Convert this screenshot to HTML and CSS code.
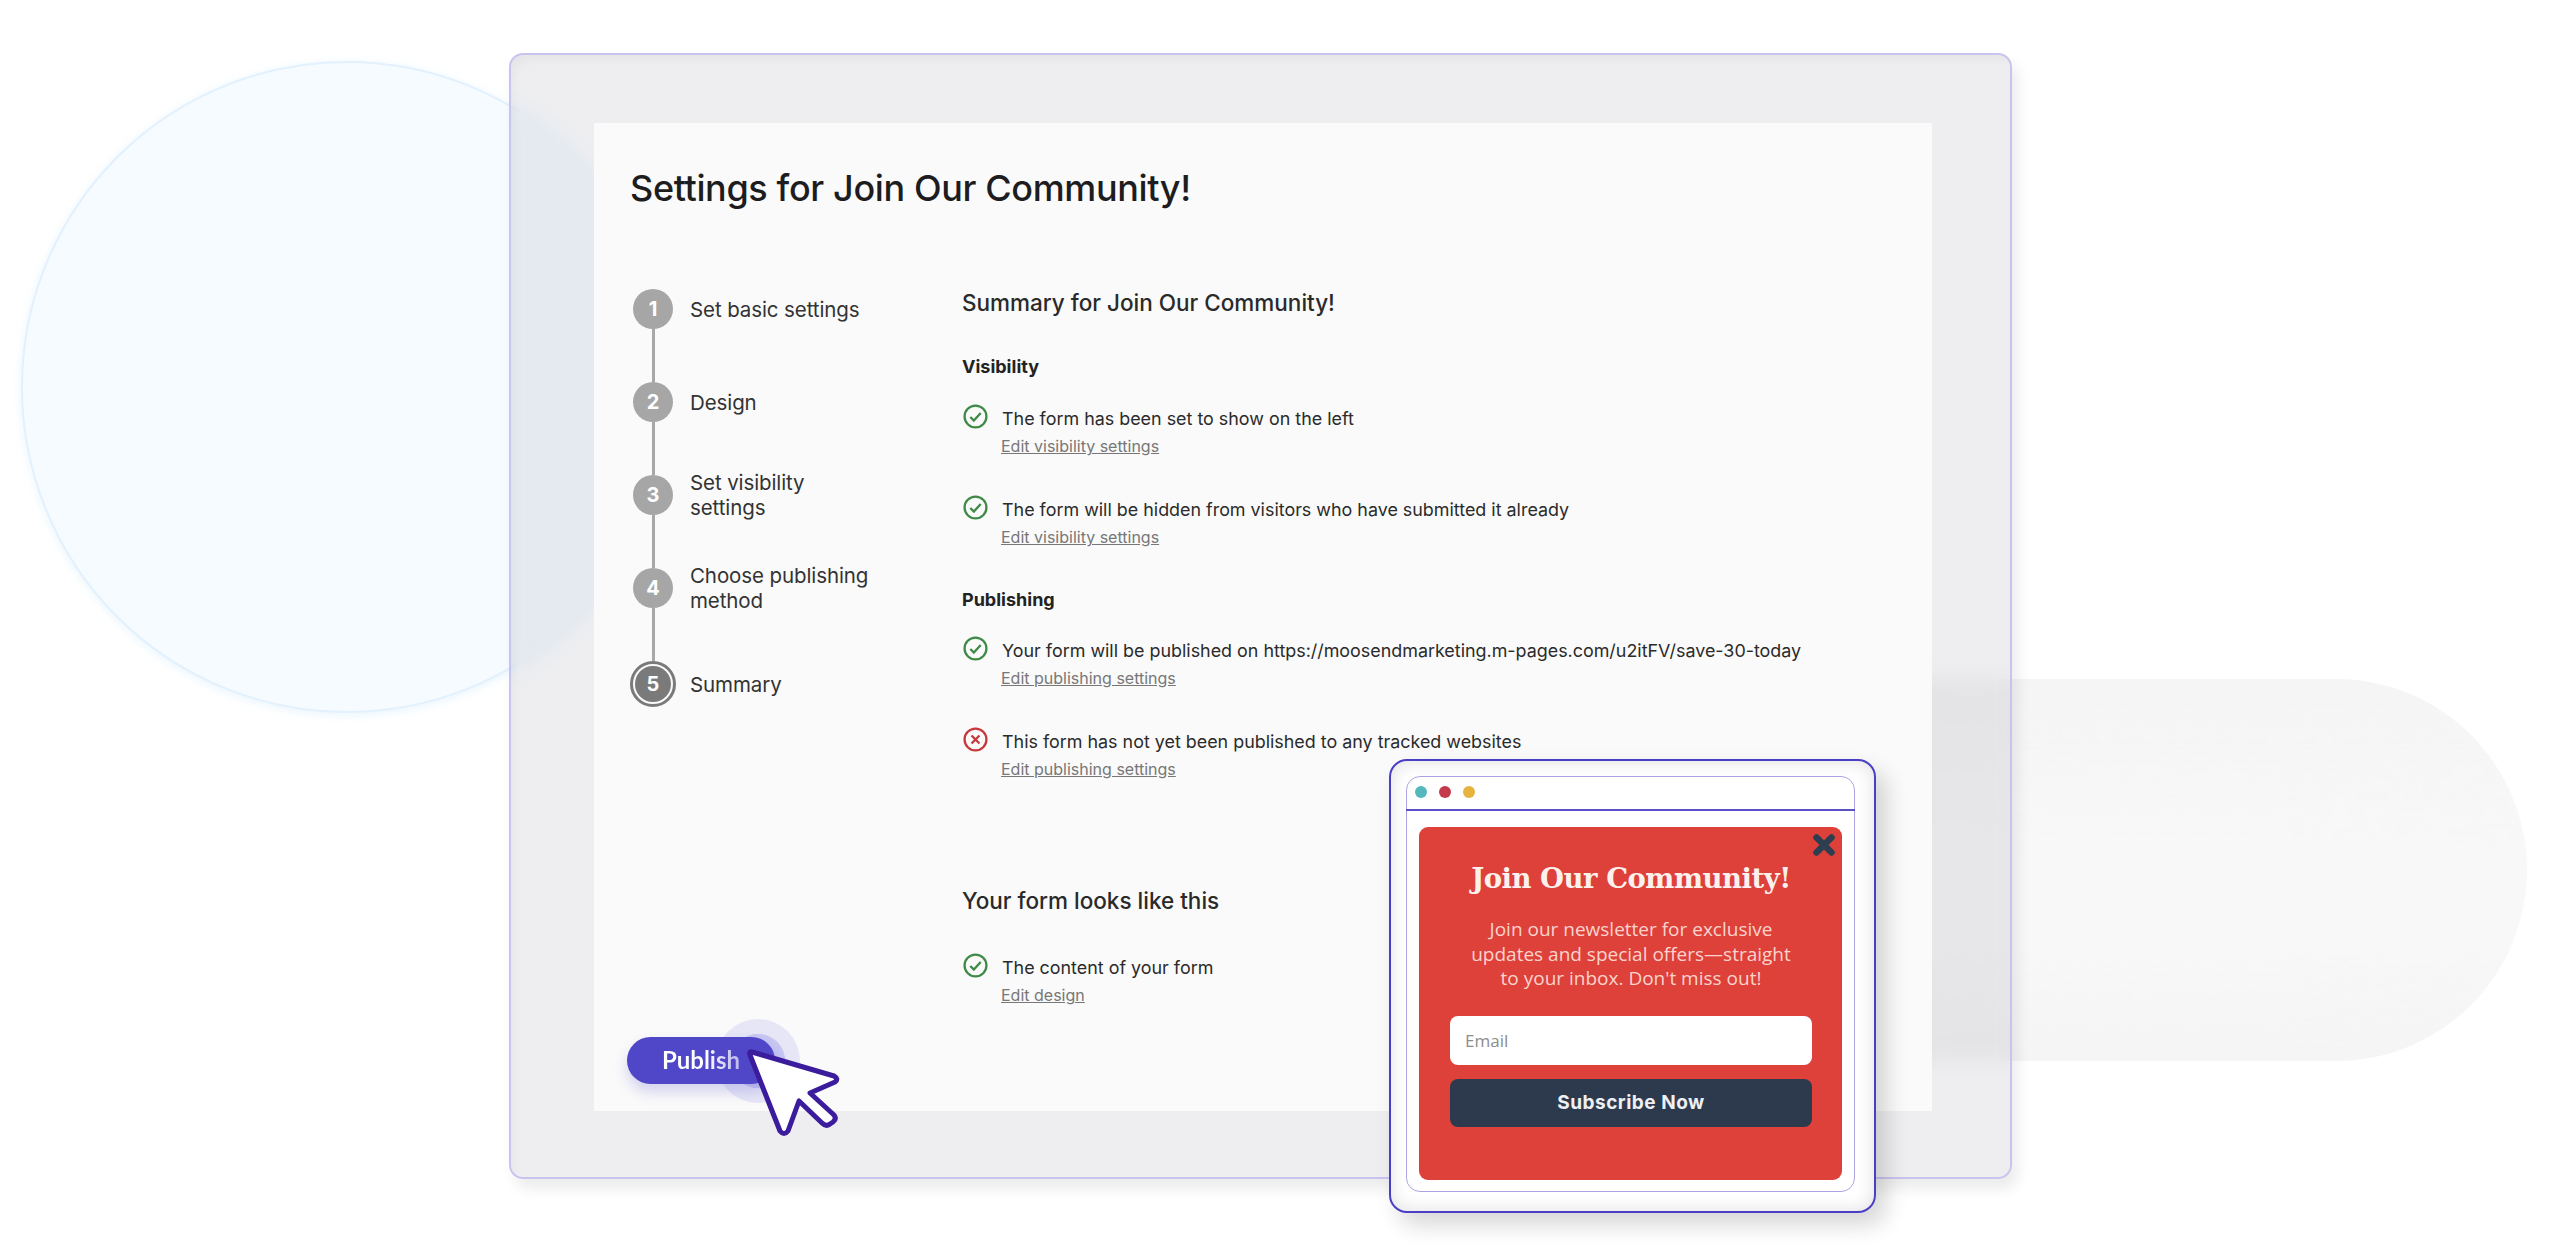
FILE: index.html
```html
<!DOCTYPE html>
<html lang="en">
<head>
  <meta charset="UTF-8" />
  <title>Settings for Join Our Community!</title>
  <link rel="stylesheet" href="styles.css">
</head>
<body>
  <div class="stage">
    <div class="bg-circle"></div>
    <div class="bg-pill">
      <svg class="pill-grain" width="1100" height="382">
        <filter id="grain">
          <feTurbulence type="fractalNoise" baseFrequency="0.06 0.08" numOctaves="4" seed="7" />
          <feColorMatrix values="0 0 0 0 0.91  0 0 0 0 0.91  0 0 0 0 0.91  0 0 0 12 -5.4" />
        </filter>
        <rect width="1100" height="382" filter="url(#grain)" />
      </svg>
    </div>

    <div class="frame">
      <div class="panel">
        <h1 class="titulo">Settings for Join Our Community!</h1>
        <div class="colunas">
          <div class="coluna-esq">
            <ol class="steps">
              <li class="step"><span class="step-num">1</span><span class="step-txt">Set basic settings</span></li>
              <li class="step"><span class="step-num">2</span><span class="step-txt">Design</span></li>
              <li class="step"><span class="step-num">3</span><span class="step-txt">Set visibility<br>settings</span></li>
              <li class="step"><span class="step-num">4</span><span class="step-txt">Choose publishing<br>method</span></li>
              <li class="step step-atual"><span class="step-num">5</span><span class="step-txt">Summary</span></li>
            </ol>
            <div class="publish-wrap">
              <span class="ripple"></span>
              <button class="publish"><span>Publish</span></button>
            </div>
          </div>

          <div class="coluna-dir">
            <h2 class="resumo">Summary for Join Our Community!</h2>

            <h3 class="grupo">Visibility</h3>
            <div class="item">
              <svg class="ico" viewBox="0 0 24 24"><circle cx="12" cy="12" r="10.5" /><path d="M7 12.5l3.4 3.4L17 8.6" /></svg>
              <div>
                <p>The form has been set to show on the left</p>
                <a href="#">Edit visibility settings</a>
              </div>
            </div>
            <div class="item">
              <svg class="ico" viewBox="0 0 24 24"><circle cx="12" cy="12" r="10.5" /><path d="M7 12.5l3.4 3.4L17 8.6" /></svg>
              <div>
                <p>The form will be hidden from visitors who have submitted it already</p>
                <a href="#">Edit visibility settings</a>
              </div>
            </div>

            <h3 class="grupo grupo-pub">Publishing</h3>
            <div class="item">
              <svg class="ico" viewBox="0 0 24 24"><circle cx="12" cy="12" r="10.5" /><path d="M7 12.5l3.4 3.4L17 8.6" /></svg>
              <div>
                <p>Your form will be published on https://moosendmarketing.m-pages.com/u2itFV/save-30-today</p>
                <a href="#">Edit publishing settings</a>
              </div>
            </div>
            <div class="item">
              <svg class="ico ico-erro" viewBox="0 0 24 24"><circle cx="12" cy="12" r="10.5" /><path d="M8.2 8.2l7.6 7.6M15.8 8.2l-7.6 7.6" /></svg>
              <div>
                <p>This form has not yet been published to any tracked websites</p>
                <a href="#">Edit publishing settings</a>
              </div>
            </div>

            <h2 class="resumo resumo-form">Your form looks like this</h2>
            <div class="item item-form">
              <svg class="ico" viewBox="0 0 24 24"><circle cx="12" cy="12" r="10.5" /><path d="M7 12.5l3.4 3.4L17 8.6" /></svg>
              <div>
                <p>The content of your form</p>
                <a href="#">Edit design</a>
              </div>
            </div>
          </div>
        </div>
      </div>
    </div>

    <svg class="cursor" viewBox="0 0 92 90" width="92" height="90">
      <path d="M4 3L86 27Q91 30 87 33L62 44L86 66Q89 70 85 73L82 75Q78 78 74 74L51 52L40 82Q36 87 32 82L2 6Q1 2 4 3Z" />
    </svg>

    <div class="popup">
      <div class="janela">
        <div class="janela-barra">
          <span class="dot dot-a"></span>
          <span class="dot dot-b"></span>
          <span class="dot dot-c"></span>
        </div>
        <div class="form-red">
          <svg class="fechar" viewBox="0 0 24 24" width="24" height="24"><path d="M4.5 4.5l15 15M19.5 4.5l-15 15" /></svg>
          <h2>Join Our Community!</h2>
          <p>Join our newsletter for exclusive updates and special offers—straight to your inbox. Don't miss out!</p>
          <div class="campo-email">Email</div>
          <button class="subscribe">Subscribe Now</button>
        </div>
      </div>
    </div>
  </div>
</body>
</html>
```

FILE: styles.css
```css
* {
  box-sizing: border-box;
}

body {
  margin: 0;
  background: #fff;
  font-family: 'Inter', sans-serif;
  color: #222;
  overflow: hidden;
}

.stage {
  position: relative;
  width: 2560px;
  height: 1249px;
  padding: 53px 0 0 509px;
  overflow: hidden;
}

/* background shapes */
.bg-circle {
  position: absolute;
  left: 21px;
  top: 61px;
  width: 652px;
  height: 652px;
  border-radius: 50%;
  background: #f5fbff;
  border: 2px solid #e2f1fd;
  box-shadow: 0 2px 10px rgba(190, 225, 250, 0.35);
}

.bg-pill {
  position: absolute;
  left: 1500px;
  top: 679px;
  width: 1027px;
  height: 382px;
  border-radius: 191px;
  overflow: hidden;
  background: linear-gradient(to bottom, #f5f5f5, #f8f8f8 40%, #f8f8f8 70%, #f5f5f5);
}

.pill-grain {
  display: block;
  opacity: 0.6;
  -webkit-mask-image: linear-gradient(to bottom, #000, transparent 48%, transparent 70%, #000);
  mask-image: linear-gradient(to bottom, #000, transparent 48%, transparent 70%, #000);
}

/* main window */
.frame {
  position: relative;
  width: 1503px;
  height: 1126px;
  padding: 68px 78px 0 83px;
  background: rgba(60, 60, 85, 0.085);
  -webkit-backdrop-filter: blur(10px);
  backdrop-filter: blur(10px);
  border: 2px solid #c8c4f0;
  border-radius: 14px;
  box-shadow: 6px 10px 14px rgba(0, 0, 0, 0.08), inset 10px 12px 10px -8px rgba(0, 0, 0, 0.04);
}

.panel {
  height: 988px;
  padding: 42px 0 27px 36px;
  background: #fafafa;
  display: flex;
  flex-direction: column;
}

.titulo {
  margin: 0 0 78px;
  font-size: 36px;
  line-height: 46px;
  letter-spacing: -0.37px;
  font-weight: 500;
  color: #1d1d1f;
}

.colunas {
  flex: 1;
  display: grid;
  grid-template-columns: 332px 1fr;
}

.coluna-esq {
  display: flex;
  flex-direction: column;
}

/* steps */
.steps {
  list-style: none;
  margin: 0;
  padding: 0 0 0 3px;
  display: flex;
  flex-direction: column;
  gap: 53px;
}

.step {
  position: relative;
  display: flex;
  align-items: center;
  gap: 17px;
  height: 40px;
}

.step-num {
  flex: none;
  width: 40px;
  height: 40px;
  border-radius: 50%;
  background: #a6a6a6;
  color: #fff;
  font-size: 20px;
  font-weight: 700;
  display: flex;
  align-items: center;
  justify-content: center;
}

.step:not(:last-child)::after {
  content: "";
  position: absolute;
  left: 19px;
  top: 40px;
  width: 3px;
  height: 53px;
  background: #a8a8a8;
}

.step-txt {
  font-size: 20.5px;
  line-height: 25px;
  letter-spacing: -0.1px;
  color: #333;
}

.step-atual {
  height: 46px;
  gap: 14px;
}

.step-atual .step-num {
  width: 46px;
  height: 46px;
  margin-left: -3px;
  padding: 2px;
  border: 3px solid #7a7a7a;
  background: #7a7a7a content-box;
}

/* publish */
.publish-wrap {
  position: relative;
  margin-top: auto;
  margin-left: -3px;
  width: 148px;
  height: 47px;
}

.ripple {
  position: absolute;
  left: 89px;
  top: -18px;
  width: 84px;
  height: 84px;
  border-radius: 50%;
  background: radial-gradient(circle closest-side, #b9b8ef 0, #c9c8f2 64%, #e6e6f6 65%, #e6e6f6 100%);
}

.publish {
  position: relative;
  display: block;
  width: 148px;
  height: 47px;
  padding: 0 0 2px;
  border: none;
  border-radius: 24px;
  background: #4f46c8;
  box-shadow: 0 8px 14px rgba(79, 70, 200, 0.22);
  font-family: 'Lato', sans-serif;
  font-size: 24px;
  font-weight: 700;
}

.publish span {
  background: linear-gradient(to right, #fff 55%, #b9b6ee);
  -webkit-background-clip: text;
  background-clip: text;
  color: transparent;
}

/* summary column */
.resumo {
  margin: -1px 0 37px;
  font-size: 22.5px;
  line-height: 30px;
  font-weight: 500;
  color: #2a2a2a;
}

.resumo-form {
  margin: 107px 0 40px;
}

.grupo {
  margin: 0 0 28px;
  font-size: 18px;
  line-height: 24px;
  font-weight: 700;
  color: #222;
}

.grupo-pub {
  margin: 41px 0 27px;
}

.item {
  display: flex;
  margin-left: 1px;
  margin-top: 42px;
}

.grupo + .item,
.item-form {
  margin-top: 0;
}

.ico {
  flex: none;
  width: 25px;
  height: 25px;
  margin-top: -3px;
  margin-right: 14px;
  fill: none;
  stroke: #3f8a47;
  stroke-width: 2.2;
}

.ico-erro {
  stroke: #c8373c;
}

.item p {
  margin: 0 0 5px;
  font-size: 17.9px;
  line-height: 24px;
  color: #2b2b2b;
}

.item a {
  display: block;
  margin-left: -1px;
  font-size: 16px;
  line-height: 20px;
  color: #777;
}

/* mouse cursor */
.cursor {
  position: absolute;
  left: 748px;
  top: 1049px;
  overflow: visible;
}

.cursor path {
  fill: #fff;
  stroke: #3a1c9c;
  stroke-width: 5;
  stroke-linejoin: round;
}

/* form preview */
.popup {
  position: absolute;
  left: 1389px;
  top: 759px;
  width: 487px;
  height: 454px;
  padding: 15px 19px 19px 15px;
  background: #fff;
  border: 2.5px solid #4a3fc4;
  border-radius: 18px;
  box-shadow: 10px 12px 22px rgba(0, 0, 0, 0.16), inset 0 0 18px rgba(0, 0, 0, 0.13);
}

.janela {
  height: 100%;
  background: #fff;
  border: 1.5px solid #aaa5e2;
  border-radius: 14px;
  padding-bottom: 11px;
  display: flex;
  flex-direction: column;
}

.janela-barra {
  flex: none;
  height: 34px;
  display: flex;
  align-items: center;
  gap: 12px;
  padding: 0 0 2px 9px;
  border-bottom: 2px solid #5a50c8;
  margin: 0 -1px;
}

.dot {
  width: 12px;
  height: 12px;
  border-radius: 50%;
}

.dot-a { background: #55b9bb; }
.dot-b { background: #c23a4c; }
.dot-c { background: #e8b23e; }

.form-red {
  position: relative;
  flex: 1;
  margin: 16px 12px 0 12px;
  padding: 32px 30px 0 31px;
  background: #dd4139;
  border-radius: 9px;
  text-align: center;
}

.fechar {
  position: absolute;
  right: 6px;
  top: 6px;
}

.fechar path {
  fill: none;
  stroke: #2c3e50;
  stroke-width: 6.5;
  stroke-linecap: round;
}

.form-red h2 {
  margin: 0 0 20px;
  font-family: 'DejaVu Serif', serif;
  font-size: 27.5px;
  line-height: 38px;
  letter-spacing: -0.5px;
  font-weight: 700;
  color: #fdf1ee;
}

.form-red p {
  margin: 0 0 25px;
  padding: 0 15px;
  font-family: 'Open Sans', sans-serif;
  font-size: 19px;
  line-height: 24.5px;
  color: #fbd3cd;
}

.campo-email {
  height: 49px;
  padding-left: 15px;
  background: #fff;
  border-radius: 8px;
  font-family: 'Open Sans', sans-serif;
  font-size: 17px;
  line-height: 49px;
  color: #8d8d8d;
  text-align: left;
}

.subscribe {
  display: block;
  width: 100%;
  height: 48px;
  margin-top: 14px;
  border: none;
  border-radius: 8px;
  background: #2d3a4e;
  color: #eef0f3;
  font-family: 'Inter', sans-serif;
  font-size: 19px;
  letter-spacing: 0.5px;
  font-weight: 700;
}
```
